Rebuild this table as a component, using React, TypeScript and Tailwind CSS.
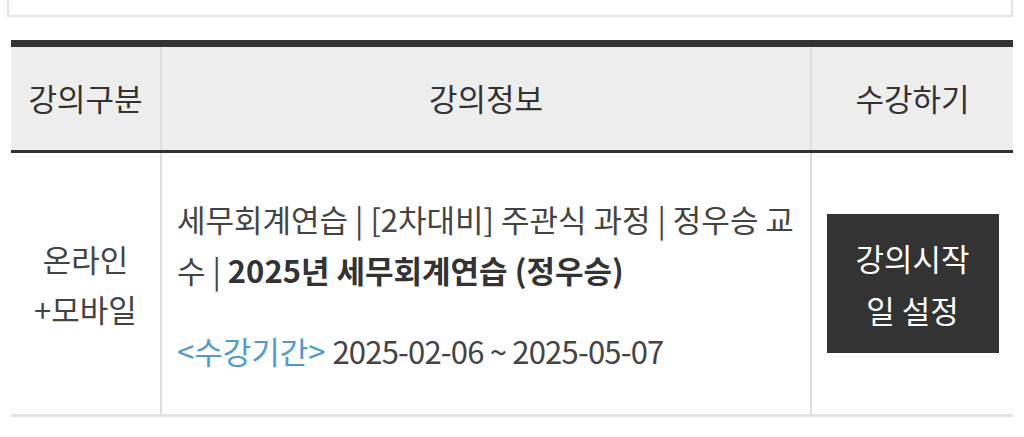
export default function App() {
  const font = { fontFamily: '"Noto Sans CJK KR", "Noto Sans", sans-serif' };
  return (
    <div className="w-[1024px] h-[437px] overflow-hidden bg-white" style={font}>
      <div className="ml-[7px] mr-[11px] h-[17px] border-2 border-t-0 border-[#e3e3e3]" />
      <div className="ml-[11px] mr-[11px] mt-[23px]">
        <div className="flex h-[113px] border-t-[7px] border-b-[3px] border-t-[#333333] border-b-[#333333] bg-[#eeeeee] text-[31px] text-[#333333]">
          <div className="w-[151px] border-r-2 border-[#dddddd] flex items-center justify-center">강의구분</div>
          <div className="w-[650px] border-r-2 border-[#dddddd] flex items-center justify-center">강의정보</div>
          <div className="flex-1 flex items-center justify-center">수강하기</div>
        </div>
        <div className="flex h-[264px] border-b-[3px] border-[#e3e3e3] text-[31px] text-[#444444]">
          <div className="w-[151px] border-r-2 border-[#dddddd] flex items-center justify-center text-center leading-[50px]">
            온라인<br />+모바일
          </div>
          <div className="w-[650px] border-r-2 border-[#dddddd] flex flex-col justify-center pl-[15px] pr-[6px] pt-[2px] leading-[51px] break-all">
            <div>
              세무회계연습 | [2차대비] 주관식 과정 | 정우승 교수 |{" "}
              <b className="font-bold text-[#333333]">2025년 세무회계연습 (정우승)</b>
            </div>
            <div className="mt-[30px]">
              <span className="text-[#4f9bd0]">&lt;수강기간&gt;</span>{" "}
              <span className="tracking-[-0.8px]">2025-02-06 ~ 2025-05-07</span>
            </div>
          </div>
          <div className="flex-1 flex items-center justify-center">
            <div className="w-[172px] h-[139px] bg-[#333333] text-white flex items-center justify-center text-center leading-[52px]">
              강의시작<br />일 설정
            </div>
          </div>
        </div>
      </div>
    </div>
  );
}
